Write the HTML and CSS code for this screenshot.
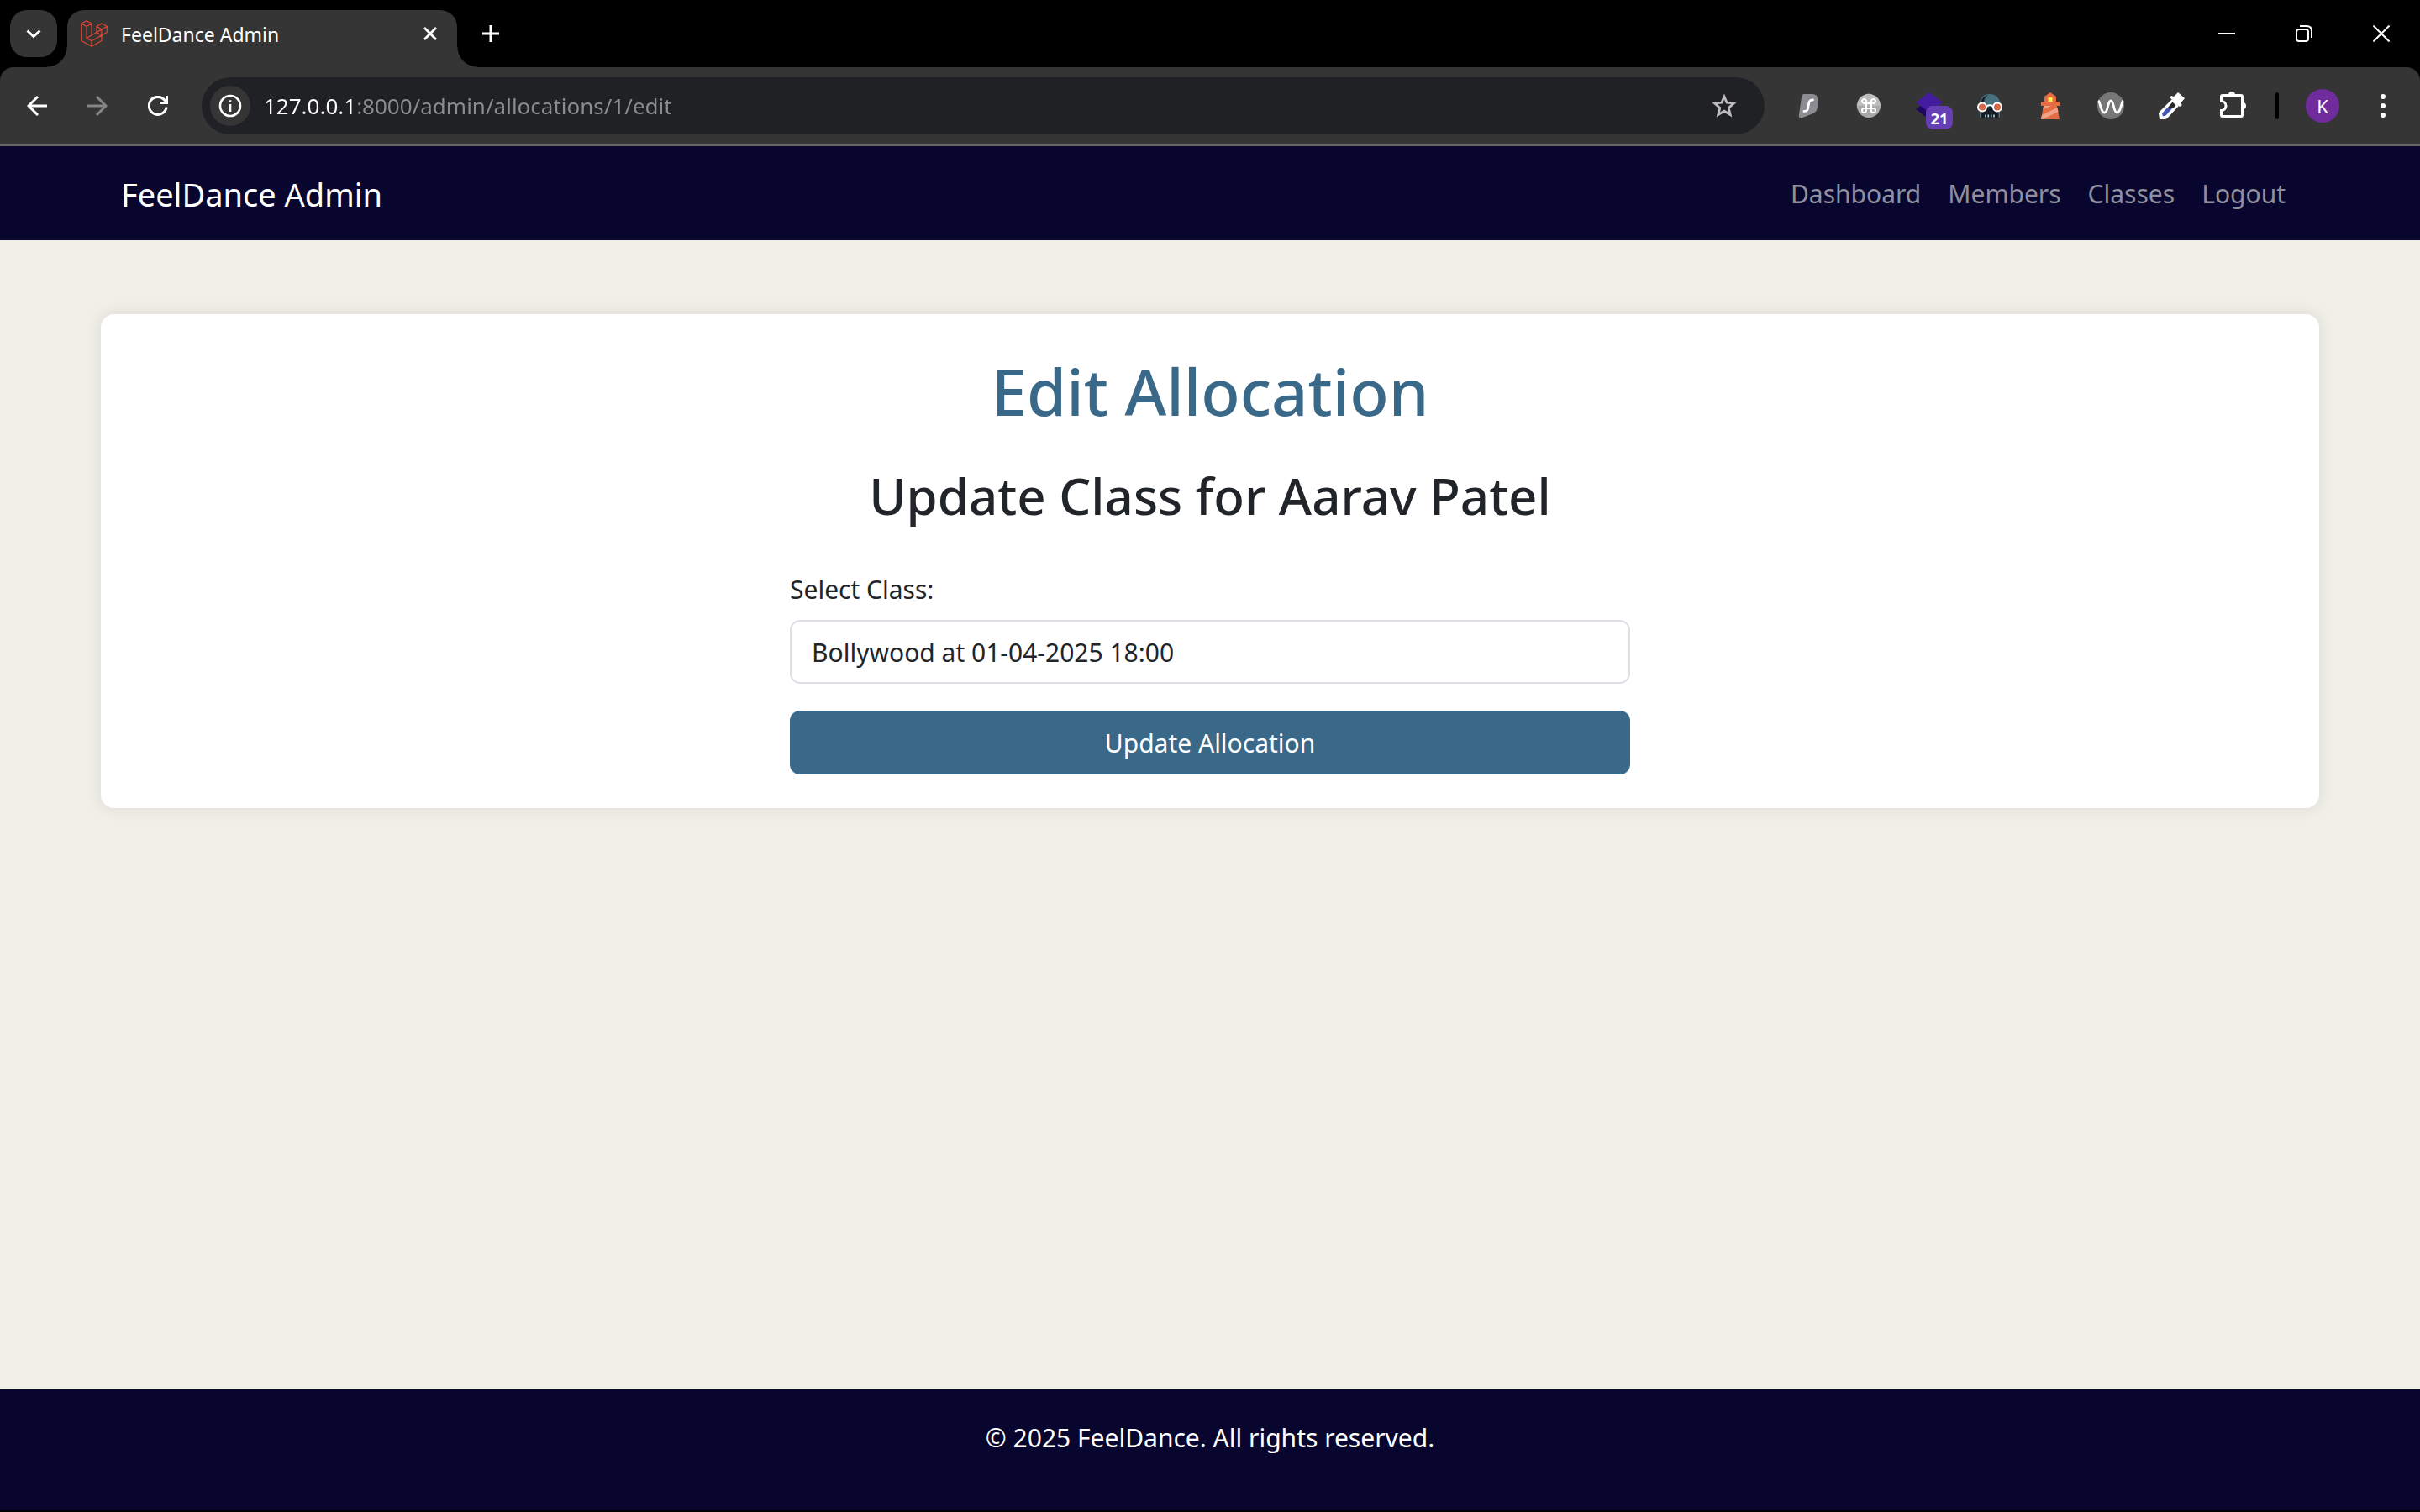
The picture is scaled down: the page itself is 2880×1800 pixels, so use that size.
FILE: index.html
```html
<!DOCTYPE html>
<html lang="en">
<head>
<meta charset="utf-8">
<meta name="viewport" content="width=device-width, initial-scale=1">
<title>FeelDance Admin</title>
<link rel="stylesheet" href="styles.css">
</head>
<body>
<div class="browser">
  <div class="tab-strip">
    <button class="tab-search" type="button" aria-label="Search tabs">
      <svg width="24" height="24" viewBox="0 0 24 24" fill="none" stroke="#fff" stroke-width="3"><path d="M4.500 8.500L12 15.500L19.500 8.500"/></svg>
    </button>
    <div class="tab">
      <svg class="tab-icon" width="32" height="32" viewBox="0 0 32 32" fill="none" stroke="#e0452f" stroke-width="1.200" stroke-linejoin="round"><path d="M.7 4L7 .7L13 4L7 7.500ZM.7 4V24.500L13 31.300L25 24.500V11M13 4V18M7 7.500V21.500L13 24.800V31.300M7 21.500L19 14.500L25 18L13 24.800M19 14.500V7.300L25 4L31.300 7.300L25 11ZM19 7.300L25 11M31.300 7.300V14.500L25 18"/></svg>
      <span class="tab-title">FeelDance Admin</span>
      <button class="tab-close" type="button" aria-label="Close tab">
        <svg width="20" height="20" viewBox="0 0 20 20" fill="none" stroke="#fff" stroke-width="2.800"><path d="M3 3L17 17M17 3L3 17"/></svg>
      </button>
    </div>
    <button class="new-tab" type="button" aria-label="New tab">
      <svg width="20" height="20" viewBox="0 0 20 20" fill="none" stroke="#fff" stroke-width="3"><path d="M0 10H20M10 0V20"/></svg>
    </button>
    <div class="window-controls">
      <button class="window-button" type="button" aria-label="Minimize"><svg width="20" height="20" viewBox="0 0 20 20" fill="none" stroke="#fff" stroke-width="2"><path d="M0 10H20"/></svg></button>
      <button class="window-button" type="button" aria-label="Restore"><svg width="20" height="20" viewBox="0 0 20 20" fill="none" stroke="#fff" stroke-width="2"><rect x="1" y="5" width="14" height="14" rx="3"/><path d="M5 1H13Q19 1 19 7V15"/></svg></button>
      <button class="window-button" type="button" aria-label="Close"><svg width="20" height="20" viewBox="0 0 20 20" fill="none" stroke="#fff" stroke-width="2"><path d="M.5 .5L19.500 19.500M19.500 .5L.5 19.500"/></svg></button>
    </div>
  </div>

  <div class="toolbar">
    <button class="tool" type="button" aria-label="Back"><svg width="24" height="24" viewBox="0 0 24 24" fill="none" stroke="#fff" stroke-width="3"><path d="M24 12H2M13 1L2 12L13 23"/></svg></button>
    <button class="tool" type="button" aria-label="Forward"><svg width="24" height="24" viewBox="0 0 24 24" fill="none" stroke="#868686" stroke-width="3"><path d="M0 12H22M11 1L22 12L11 23"/></svg></button>
    <button class="tool" type="button" aria-label="Reload"><svg width="24" height="24" viewBox="0 0 24 24" fill="none" stroke="#fff" stroke-width="3"><path d="M22.200 13.500A10.500 10.500 0 1 1 20 5.300L22 8M22.500 0V8.500H14"/></svg></button>
    <div class="omnibox">
      <button class="site-info" type="button" aria-label="View site information"><svg width="28" height="28" viewBox="0 0 28 28" fill="none" stroke="#fff"><circle cx="14" cy="14" r="12" stroke-width="2.600"/><path d="M14 12V21M14 7.300V10" stroke-width="2.600"/></svg></button>
      <input class="url" type="text" aria-label="Address" value="127.0.0.1:8000/admin/allocations/1/edit">
      <button class="tool" type="button" aria-label="Bookmark this page"><svg width="32" height="32" viewBox="0 0 32 32" fill="none" stroke="#bdbdbd" stroke-width="2.800"><path d="M16 5L19.100 12.200L27.500 12.900L21.200 18.400L23.200 26.500L16 22.200L8.800 26.500L10.800 18.400L4.500 12.900L12.900 12.200Z"/></svg></button>
    </div>
    <button class="tool" type="button" aria-label="VPN extension"><svg width="32" height="32" viewBox="0 0 32 32"><path d="M11 2H21Q27 2 27 8V17Q27 22 22 25L8 30.500Q4 31 5 26L8 6Q8.500 2 11 2Z" fill="#8d8c93"/><path d="M21.500 9C16 9 17 13 16 16.500C15.500 20.500 15 22.500 11 22.500" fill="none" stroke="#fff" stroke-width="2.800" stroke-linecap="round"/></svg></button>
    <button class="tool" type="button" aria-label="Shortcut extension"><svg width="32" height="32" viewBox="0 0 32 32"><path d="M11 3Q16 .5 21 3Q27 5 29 11Q31.500 16 29 21Q27 27 21 29Q16 31.500 11 29Q5 27 3 21Q.5 16 3 11Q5 5 11 3Z" fill="#a9a9a9"/><path d="M3 11Q5 5 11 3Q16 .5 21 3Q27 5 29 11L30 16H2Z" fill="#bcbcbc"/><path d="M13 13V11A2.500 2.500 0 1 0 10.500 13H21.500A2.500 2.500 0 1 0 19 10.500V21.500A2.500 2.500 0 1 0 21.500 19H10.500A2.500 2.500 0 1 0 13 21.500Z" fill="none" stroke="#fff" stroke-width="2"/></svg></button>
    <button class="tool layers" type="button" aria-label="Layers extension"><svg width="32" height="32" viewBox="0 0 32 32"><path d="M0 20L6 15.500L20 20V29.500L16 32Z" fill="#1e0660"/><path d="M16 0L32 12L16 24L0 12Z" fill="#441ca0"/></svg><span class="badge">21</span></button>
    <button class="tool" type="button" aria-label="Agent extension"><svg width="32" height="32" viewBox="0 0 32 32"><path d="M4 14C4 6 9 2 16 2S28 6 28 14V30H4Z" fill="#48717f"/><path d="M5 13C6 7 10 4 14 3C10 6 9 10 9 14Z" fill="#182128"/><path d="M5.500 18L13 19L16 16L19 19L26.500 18V30.500H5.500Z" fill="#151d25"/><path d="M11 26.500V29.500M14.300 26.500V29.500M17.700 26.500V29.500M21 26.500V29.500" stroke="#b7d5dc" stroke-width="1.600"/><circle cx="7" cy="17.500" r="5" fill="#d5684b" stroke="#fff" stroke-width="2"/><circle cx="25" cy="17.500" r="5" fill="#d5684b" stroke="#fff" stroke-width="2"/><path d="M12 16.500Q16 14 20 16.500" fill="none" stroke="#fff" stroke-width="2"/></svg></button>
    <button class="tool" type="button" aria-label="Lighthouse"><svg width="32" height="32" viewBox="0 0 32 32"><path d="M16 0L23 5V11H27V16H24L27 32H5L8 16H5V11H9V5Z" fill="#e66d42"/><path d="M8.200 16H17L7 20.500ZM6 27L24.500 18L25.500 23L7 32H5Z" fill="#f0a287"/><path d="M13.500 6H18.500V11H13.500Z" fill="#fff04f"/></svg></button>
    <button class="tool" type="button" aria-label="Wave extension"><svg width="32" height="32" viewBox="0 0 32 32"><circle cx="16" cy="16" r="16" fill="#777"/><path d="M1 10C4 12 4 24 8.500 24C13 24 12 10 16 10S19 24 23.500 24C28 24 28 12 31 10" fill="none" stroke="#fff" stroke-width="2.800"/></svg></button>
    <button class="tool" type="button" aria-label="Color picker"><svg width="32" height="32" viewBox="0 0 32 32"><path d="M17 8L25 16L11 31L9 32H2L1 25L2 23Z" fill="#fff"/><path d="M17.500 11.500L21.500 15.500L18 19H11Z" fill="#25282c"/><path d="M11 18.500H17.500L9.500 27.500L6 28.500L5 25Z" fill="#4355bb"/><path d="M19 5L24 0L32 7L27 13L29 15L26 17L14 6L16 4Z" fill="#fff"/></svg></button>
    <button class="tool" type="button" aria-label="Extensions"><svg width="36" height="36" viewBox="0 0 36 36"><path d="M7 5.500H29Q30.500 5.500 30.500 7V29Q30.500 30.500 29 30.500H7Q5.500 30.500 5.500 29V23.500A5.500 5.500 0 0 0 5.500 12.500V7Q5.500 5.500 7 5.500Z" fill="none" stroke="#fff" stroke-width="3"/><path d="M14 5A4 4 0 0 1 22 5ZM31 14A4 4 0 0 1 31 22Z" fill="#fff"/></svg></button>
    <span class="tool-divider"></span>
    <button class="tool" type="button" aria-label="Profile"><span class="avatar">K</span></button>
    <button class="tool" type="button" aria-label="Menu"><svg width="8" height="28" viewBox="0 0 8 28" fill="#fff"><circle cx="4" cy="3" r="3"/><circle cx="4" cy="14" r="3"/><circle cx="4" cy="25" r="3"/></svg></button>
  </div>
</div>

<nav class="navbar">
  <a class="brand" href="#">FeelDance Admin</a>
  <div class="nav-links">
    <a href="#">Dashboard</a>
    <a href="#">Members</a>
    <a href="#">Classes</a>
    <a href="#">Logout</a>
  </div>
</nav>

<main class="content">
  <section class="card">
    <h1 class="title">Edit Allocation</h1>
    <h2 class="subtitle">Update Class for Aarav Patel</h2>
    <form class="form">
      <label class="label" for="class-select">Select Class:</label>
      <select class="select" id="class-select">
        <option>Bollywood at 01-04-2025 18:00</option>
      </select>
      <button class="submit" type="button">Update Allocation</button>
    </form>
  </section>
</main>

<footer class="footer">© 2025 FeelDance. All rights reserved.</footer>
</body>
</html>
```

FILE: styles.css
```css
* {
  box-sizing: border-box;
}

body {
  margin: 0;
  min-height: 100vh;
  display: flex;
  flex-direction: column;
  background: #f1f0e8;
  color: #212529;
  font-family: "Noto Sans", "Open Sans", sans-serif;
  font-size: 30px;
  line-height: 48px;
}

button,
input,
select {
  margin: 0;
  padding: 0;
  border: 0;
  background: none;
  color: inherit;
  font: inherit;
}

svg {
  display: block;
  flex: none;
}

a {
  text-decoration: none;
}

/* Browser window */
.browser {
  background: #000;
  color: #fff;
}

.tab-strip {
  display: flex;
  height: 80px;
  padding: 12px 0 0 12px;
}

.tab-search {
  display: grid;
  place-items: center;
  width: 56px;
  height: 56px;
  border-radius: 20px;
  background: #353535;
}

.tab {
  position: relative;
  display: flex;
  align-items: center;
  width: 464px;
  margin-left: 12px;
  padding: 0 20px 12px 16px;
  border-radius: 20px 20px 0 0;
  background: #353535;
}

.tab::before,
.tab::after {
  content: "";
  position: absolute;
  bottom: 0;
  width: 24px;
  height: 24px;
}

.tab::before {
  right: 100%;
  background: radial-gradient(circle at 0 0, transparent 23px, #353535 24px);
}

.tab::after {
  left: 100%;
  background: radial-gradient(circle at 100% 0, transparent 23px, #353535 24px);
}

.tab-title {
  flex: 1;
  margin-left: 16px;
  padding-top: 2px;
  font-size: 23px;
  line-height: 32px;
}

.tab-close {
  display: grid;
  place-items: center;
  width: 24px;
  height: 24px;
}

.new-tab {
  display: grid;
  place-items: center;
  width: 56px;
  height: 56px;
  margin-left: 12px;
}

.window-controls {
  display: flex;
  height: 56px;
  margin-left: auto;
}

.window-button {
  display: grid;
  place-items: center;
  width: 92px;
}

.toolbar {
  display: flex;
  align-items: center;
  height: 94px;
  padding: 0 8px;
  border-bottom: 2px solid #666;
  border-radius: 16px 16px 0 0;
  background: #353535;
}

.tool {
  display: grid;
  place-items: center;
  flex: none;
  width: 72px;
  height: 56px;
}

.omnibox {
  display: flex;
  align-items: center;
  flex: 1;
  height: 68px;
  margin: 0 16px;
  padding: 0 12px 0 10px;
  border-radius: 34px;
  background: #202125;
}

.site-info {
  display: grid;
  place-items: center;
  width: 48px;
  height: 48px;
  border-radius: 24px;
  background: #353535;
}

/* The host is bright, the rest of the address is dimmed */
.url {
  flex: 1;
  min-width: 0;
  height: 48px;
  margin-left: 16px;
  background: linear-gradient(90deg, #fff 107px, #8b8c8e 107px);
  background-clip: text;
  -webkit-background-clip: text;
  color: transparent;
  font-size: 26px;
}

.layers {
  position: relative;
}

.badge {
  position: absolute;
  right: 8px;
  bottom: 0;
  width: 32px;
  height: 28px;
  border-radius: 8px;
  background: #673fb4;
  color: #fff;
  font-size: 18px;
  font-weight: 700;
  line-height: 30px;
}

.tool-divider {
  width: 4px;
  height: 32px;
  margin: 0 16px;
  border-radius: 2px;
  background: #000;
}

.avatar {
  width: 40px;
  height: 40px;
  border-radius: 20px;
  background: #702c9c;
  color: #fff;
  font-size: 22px;
  line-height: 40px;
}

/* Site */
.navbar {
  display: flex;
  align-items: center;
  justify-content: space-between;
  height: 112px;
  padding: 2px 160px 0 144px;
  background: #08062e;
}

.brand {
  color: #fff;
  font-size: 38px;
}

.nav-links {
  display: flex;
  gap: 32px;
}

.nav-links a {
  color: #908f9f;
}

.content {
  flex: 1;
  padding: 88px 120px;
}

.card {
  padding: 44px 40px 40px;
  border-radius: 16px;
  background: #fff;
  box-shadow: 0 0 20px rgba(0, 0, 0, 0.1);
  text-align: center;
}

.title {
  margin: 0 0 36px;
  color: #3a6888;
  font-size: 76px;
  font-weight: 500;
  line-height: 96px;
}

.subtitle {
  margin: 0 0 48px;
  font-size: 60px;
  font-weight: 500;
  line-height: 80px;
}

.form {
  display: flex;
  flex-direction: column;
  width: 1000px;
  max-width: 100%;
  margin: 0 auto;
  text-align: left;
}

.label {
  margin-bottom: 12px;
}

.select {
  height: 76px;
  margin-bottom: 32px;
  padding: 2px 24px 0;
  border: 2px solid #dee2e6;
  border-radius: 12px;
  background: #fff;
  appearance: none;
}

.submit {
  height: 76px;
  padding-top: 2px;
  border-radius: 12px;
  background: #3a6888;
  color: #fff;
}

.footer {
  height: 146px;
  padding-top: 34px;
  border-bottom: 2px solid #000;
  background: #08062e;
  color: #fff;
  text-align: center;
}
```
